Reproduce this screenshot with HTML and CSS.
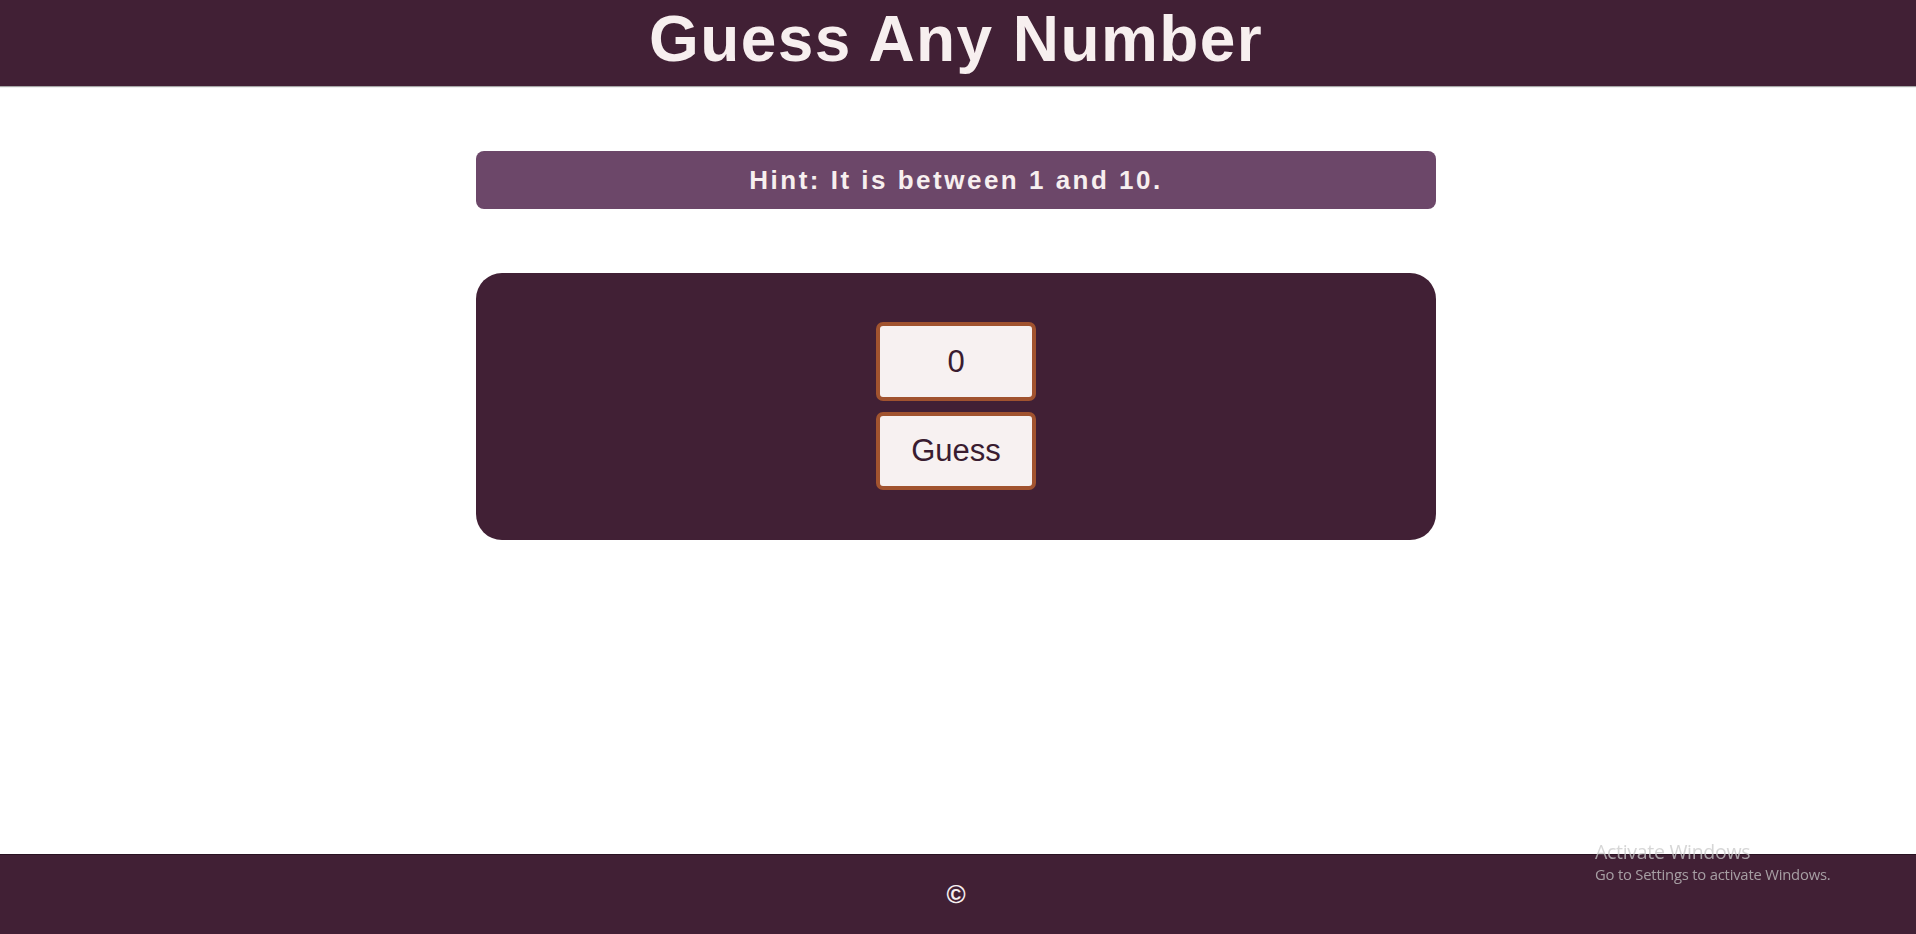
FILE: index.html
```html
<!DOCTYPE html>
<html lang="en">
<head>
<meta charset="utf-8">
<title>Guess Any Number</title>
<link rel="stylesheet" href="styles.css">
</head>
<body>
<div class="page">
  <header class="header">
    <h1 class="title">Guess Any Number</h1>
  </header>
  <main class="main">
    <div class="hint">Hint: It is between 1 and 10.</div>
    <section class="game">
      <input class="field" type="text" value="0">
      <button class="btn" type="button">Guess</button>
    </section>
  </main>
  <footer class="footer">
    <span class="copy">&copy;</span>
  </footer>
</div>
<div class="watermark">
  <div class="wm-title">Activate Windows</div>
  <div class="wm-sub">Go to Settings to activate Windows.</div>
</div>
</body>
</html>
```

FILE: styles.css
```css
html, body {
  margin: 0;
  padding: 0;
  background: #ffffff;
  font-family: "Liberation Sans", Arial, sans-serif;
}

.page {
  min-height: 100vh;
  display: flex;
  flex-direction: column;
}

.header {
  background: #412035;
  height: 86px;
  padding-right: 4px;
  display: flex;
  align-items: center;
  justify-content: center;
  box-shadow: 0 1px 1px rgba(0, 0, 0, 0.35);
}

.title {
  margin: 0;
  color: #f7efef;
  font-size: 64px;
  font-weight: 700;
  letter-spacing: 1.4px;
  line-height: 1;
  padding-bottom: 8px;
}

.main {
  display: flex;
  flex-direction: column;
  align-items: center;
  padding-top: 65px;
  padding-right: 4px;
}

.hint {
  width: 960px;
  height: 58px;
  box-sizing: border-box;
  background: #6c4769;
  color: #f7efef;
  border-radius: 8px;
  display: flex;
  align-items: center;
  justify-content: center;
  font-size: 26px;
  font-weight: 700;
  letter-spacing: 2.5px;
}

.game {
  width: 960px;
  margin-top: 64px;
  box-sizing: border-box;
  background: #412035;
  border-radius: 26px;
  padding: 49px 0 50px;
  display: flex;
  flex-direction: column;
  align-items: center;
  gap: 11px;
}

.field,
.btn {
  width: 160px;
  height: 79px;
  box-sizing: border-box;
  border: 4px solid #a1532f;
  border-radius: 7px;
  background: #f7f1f1;
  color: #3a1c30;
  font-family: "Liberation Sans", Arial, sans-serif;
  font-size: 31px;
  text-align: center;
  padding: 0;
  margin: 0;
  outline: none;
}

.btn {
  height: 78px;
}

.footer {
  margin-top: auto;
  height: 79px;
  padding-right: 4px;
  background: #412035;
  border-top: 1px solid #2a1222;
  display: flex;
  align-items: center;
  justify-content: center;
}

.copy {
  color: #f7efef;
  font-size: 26px;
  font-weight: 700;
}

.watermark {
  position: fixed;
  left: 1595px;
  top: 839px;
  color: rgba(200, 200, 200, 0.75);
  font-family: "Open Sans", "Noto Sans", sans-serif;
  pointer-events: none;
}

.wm-title {
  font-size: 19.5px;
  line-height: 25px;
  letter-spacing: -0.3px;
}

.wm-sub {
  font-size: 14.8px;
  line-height: 20px;
  letter-spacing: -0.2px;
}
```
